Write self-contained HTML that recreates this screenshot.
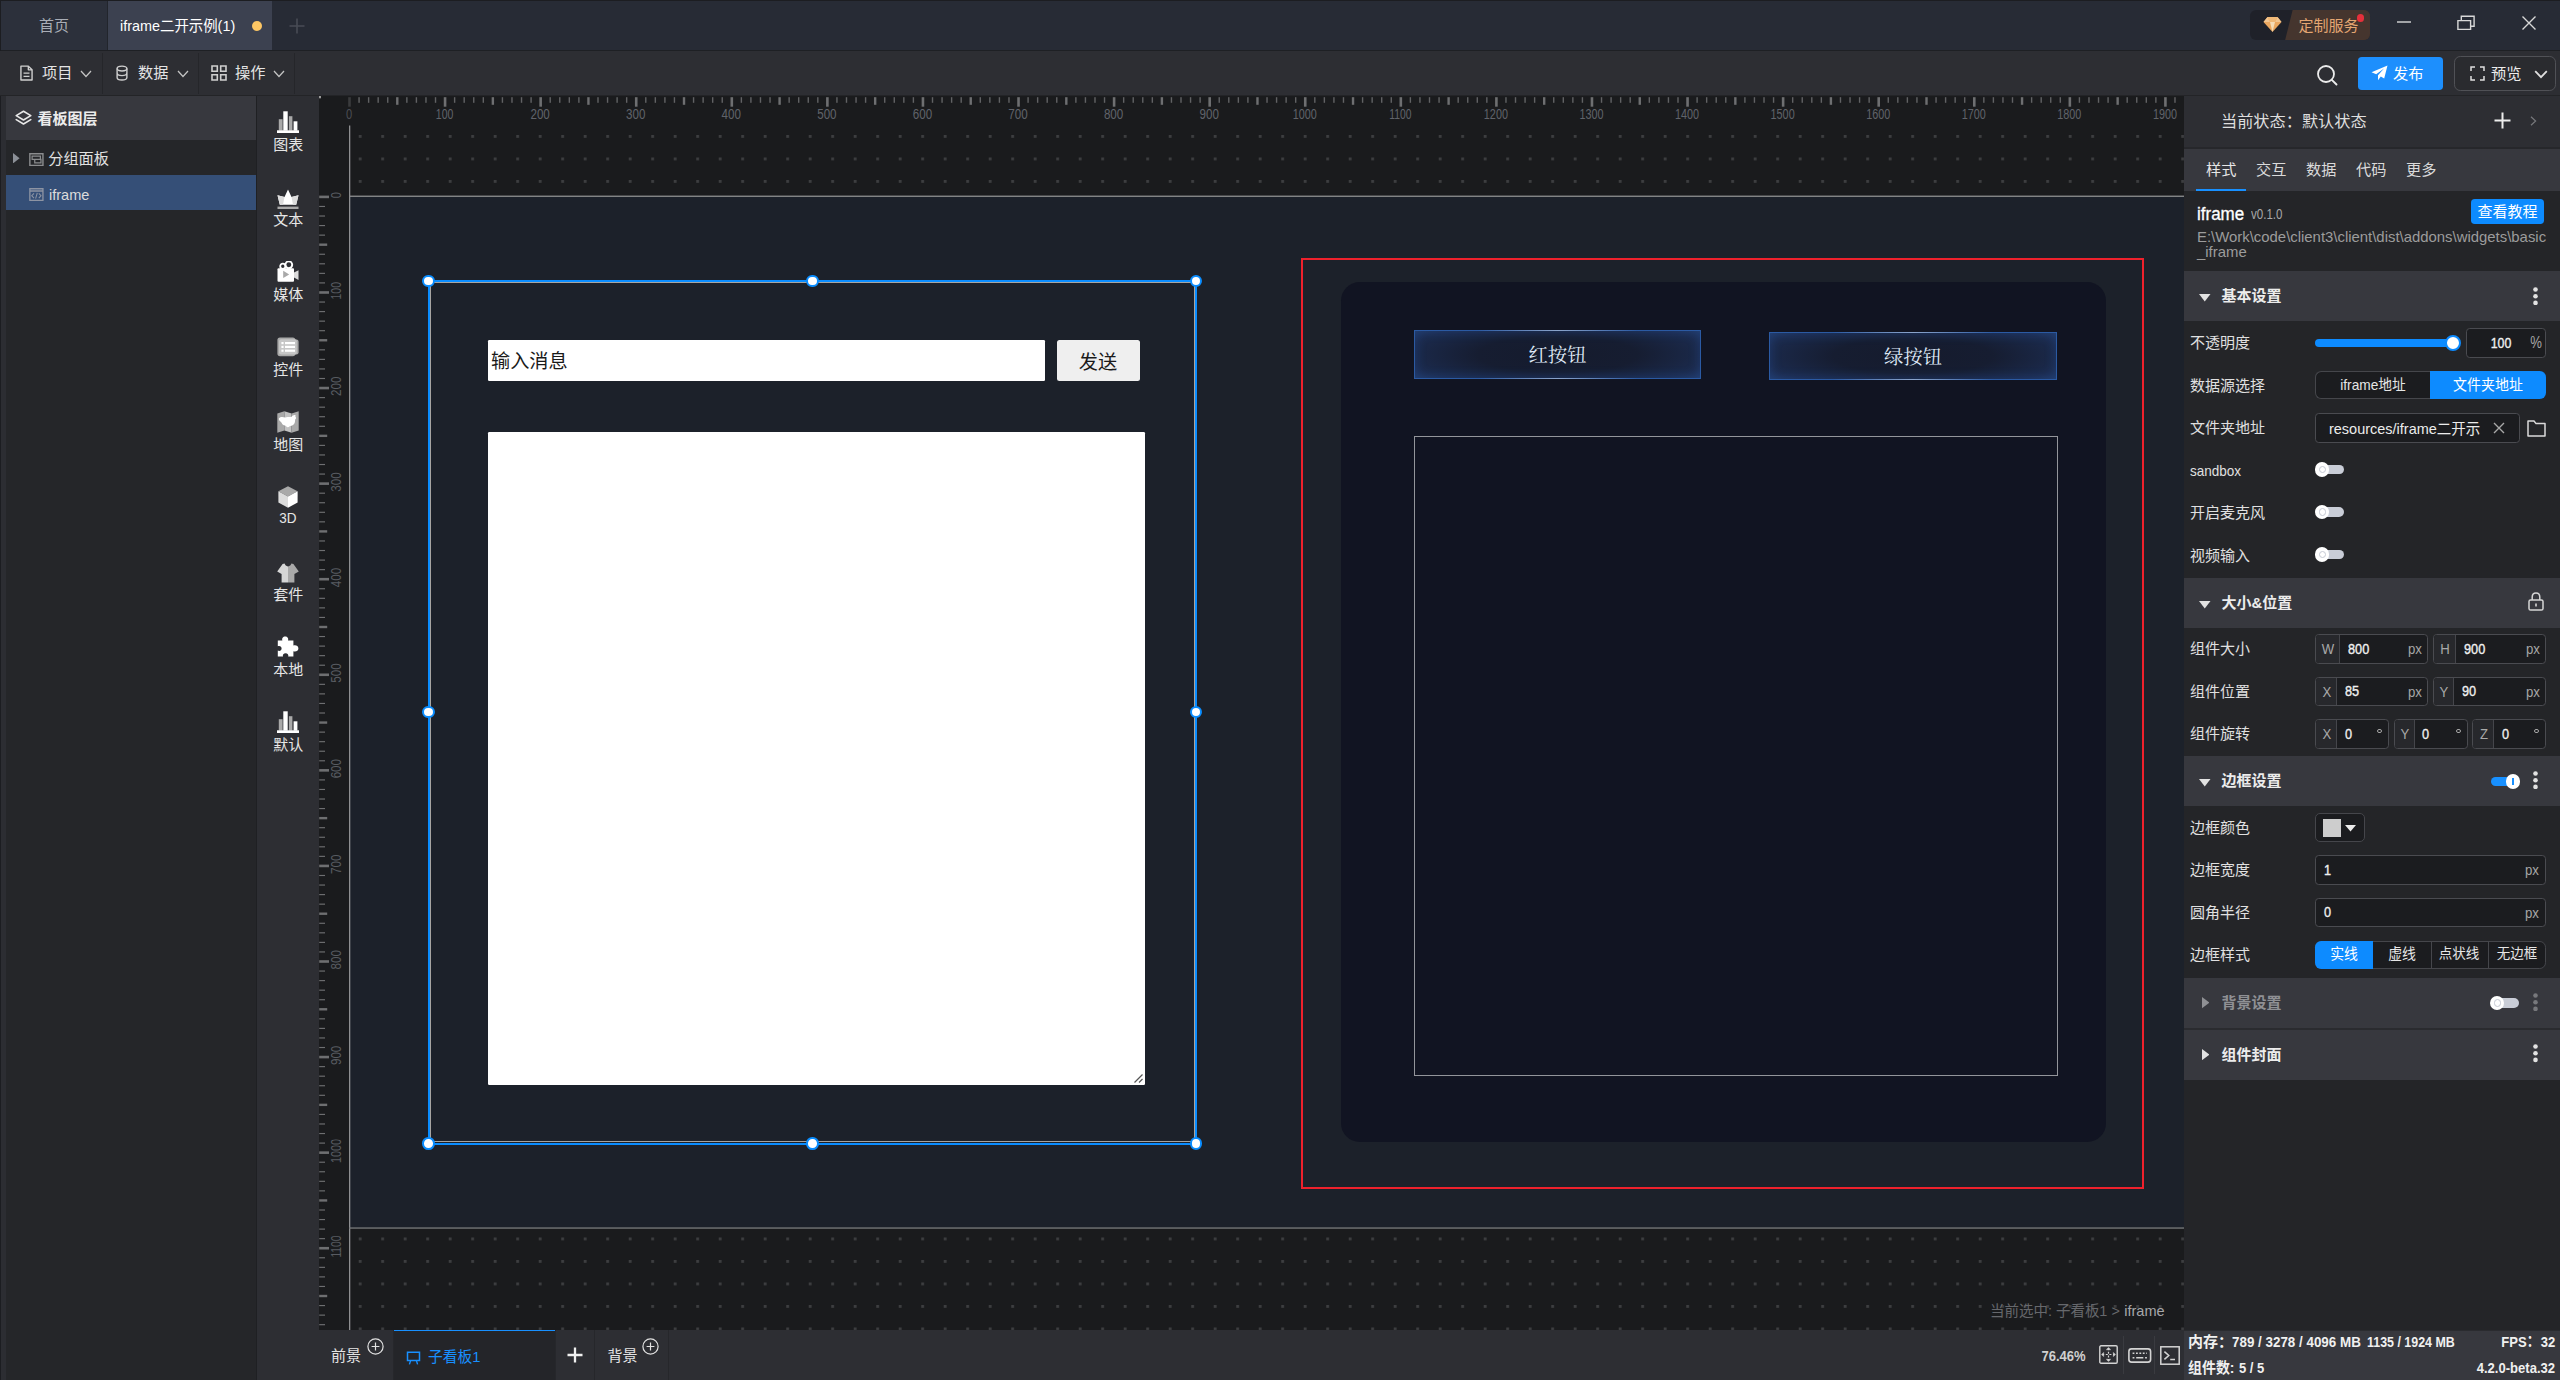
<!DOCTYPE html>
<html lang="zh-CN"><head><meta charset="utf-8"><title>iframe二开示例</title>
<style>
html,body{margin:0;padding:0;background:#232427;}
html{overflow:hidden;width:2560px;height:1380px;}
body{zoom:1.25;width:2048px;height:1104px;overflow:hidden;position:relative;
 font-family:"Liberation Sans","Noto Sans CJK SC",sans-serif;font-size:12px;color:#d6d6d6;line-height:1;}
@supports not (zoom:1.25){body{transform:scale(1.25);transform-origin:0 0;}}
div,span,svg{position:absolute;box-sizing:border-box;}
span.t{white-space:nowrap;}
.b{font-weight:bold;}
.num{font-family:"Liberation Sans",sans-serif;display:inline-block;transform-origin:0 50%;}
.serif{font-family:"Liberation Serif","Noto Serif CJK SC",serif;}
</style></head>
<body>
<svg style="left:0;top:0;width:2048px;height:1104px;font-family:'Liberation Sans',sans-serif" viewBox="0 0 2560 1380"><defs><pattern id="dots" x="358.75" y="135" width="22.5" height="22.5" patternUnits="userSpaceOnUse"><rect x="0" y="0" width="2.8" height="2.8" fill="#3d3e40"/></pattern></defs><rect x="318.75" y="95" width="1865.25" height="1235" fill="#1a1b1d"/><rect x="351" y="126" width="1833" height="1204" fill="url(#dots)"/><rect x="349.5" y="196.3" width="1834.5" height="1031.7" fill="#1c212a"/><rect x="349" y="125.5" width="1.3" height="1204.5" fill="#8e8f91"/><rect x="349" y="195.6" width="1835" height="1.3" fill="#8e8f91"/><rect x="349" y="1227.4" width="1835" height="1.3" fill="#7a7b7d"/><rect x="319" y="95.3" width="2" height="3" fill="#9a9a9a"/><rect x="348.20" y="97.2" width="2.6" height="9.5" fill="#3a3b3d"/><text x="345.90" y="119.4" font-size="14" textLength="6.199999999999999" lengthAdjust="spacingAndGlyphs" fill="#4b4d52">0</text><rect x="358.36" y="97.2" width="1.4" height="5.6" fill="#616264"/><rect x="367.92" y="97.2" width="1.4" height="5.6" fill="#616264"/><rect x="377.47" y="97.2" width="1.4" height="5.6" fill="#616264"/><rect x="387.03" y="97.2" width="1.4" height="5.6" fill="#616264"/><rect x="396.09" y="97.2" width="2.4" height="7.6" fill="#6e6f71"/><rect x="406.15" y="97.2" width="1.4" height="5.6" fill="#616264"/><rect x="415.70" y="97.2" width="1.4" height="5.6" fill="#616264"/><rect x="425.26" y="97.2" width="1.4" height="5.6" fill="#616264"/><rect x="434.82" y="97.2" width="1.4" height="5.6" fill="#616264"/><rect x="443.77" y="97.2" width="2.6" height="9.5" fill="#6e6f71"/><text x="435.82" y="119.4" font-size="14" textLength="17.5" lengthAdjust="spacingAndGlyphs" fill="#60636a">100</text><rect x="453.93" y="97.2" width="1.4" height="5.6" fill="#616264"/><rect x="463.49" y="97.2" width="1.4" height="5.6" fill="#616264"/><rect x="473.05" y="97.2" width="1.4" height="5.6" fill="#616264"/><rect x="482.61" y="97.2" width="1.4" height="5.6" fill="#616264"/><rect x="491.66" y="97.2" width="2.4" height="7.6" fill="#6e6f71"/><rect x="501.72" y="97.2" width="1.4" height="5.6" fill="#616264"/><rect x="511.28" y="97.2" width="1.4" height="5.6" fill="#616264"/><rect x="520.83" y="97.2" width="1.4" height="5.6" fill="#616264"/><rect x="530.39" y="97.2" width="1.4" height="5.6" fill="#616264"/><rect x="539.35" y="97.2" width="2.6" height="9.5" fill="#6e6f71"/><text x="530.45" y="119.4" font-size="14" textLength="19.4" lengthAdjust="spacingAndGlyphs" fill="#60636a">200</text><rect x="549.51" y="97.2" width="1.4" height="5.6" fill="#616264"/><rect x="559.06" y="97.2" width="1.4" height="5.6" fill="#616264"/><rect x="568.62" y="97.2" width="1.4" height="5.6" fill="#616264"/><rect x="578.18" y="97.2" width="1.4" height="5.6" fill="#616264"/><rect x="587.24" y="97.2" width="2.4" height="7.6" fill="#6e6f71"/><rect x="597.29" y="97.2" width="1.4" height="5.6" fill="#616264"/><rect x="606.85" y="97.2" width="1.4" height="5.6" fill="#616264"/><rect x="616.41" y="97.2" width="1.4" height="5.6" fill="#616264"/><rect x="625.97" y="97.2" width="1.4" height="5.6" fill="#616264"/><rect x="634.93" y="97.2" width="2.6" height="9.5" fill="#6e6f71"/><text x="626.02" y="119.4" font-size="14" textLength="19.4" lengthAdjust="spacingAndGlyphs" fill="#60636a">300</text><rect x="645.08" y="97.2" width="1.4" height="5.6" fill="#616264"/><rect x="654.64" y="97.2" width="1.4" height="5.6" fill="#616264"/><rect x="664.20" y="97.2" width="1.4" height="5.6" fill="#616264"/><rect x="673.75" y="97.2" width="1.4" height="5.6" fill="#616264"/><rect x="682.81" y="97.2" width="2.4" height="7.6" fill="#6e6f71"/><rect x="692.87" y="97.2" width="1.4" height="5.6" fill="#616264"/><rect x="702.43" y="97.2" width="1.4" height="5.6" fill="#616264"/><rect x="711.98" y="97.2" width="1.4" height="5.6" fill="#616264"/><rect x="721.54" y="97.2" width="1.4" height="5.6" fill="#616264"/><rect x="730.50" y="97.2" width="2.6" height="9.5" fill="#6e6f71"/><text x="721.60" y="119.4" font-size="14" textLength="19.4" lengthAdjust="spacingAndGlyphs" fill="#60636a">400</text><rect x="740.66" y="97.2" width="1.4" height="5.6" fill="#616264"/><rect x="750.21" y="97.2" width="1.4" height="5.6" fill="#616264"/><rect x="759.77" y="97.2" width="1.4" height="5.6" fill="#616264"/><rect x="769.33" y="97.2" width="1.4" height="5.6" fill="#616264"/><rect x="778.39" y="97.2" width="2.4" height="7.6" fill="#6e6f71"/><rect x="788.44" y="97.2" width="1.4" height="5.6" fill="#616264"/><rect x="798.00" y="97.2" width="1.4" height="5.6" fill="#616264"/><rect x="807.56" y="97.2" width="1.4" height="5.6" fill="#616264"/><rect x="817.12" y="97.2" width="1.4" height="5.6" fill="#616264"/><rect x="826.08" y="97.2" width="2.6" height="9.5" fill="#6e6f71"/><text x="817.17" y="119.4" font-size="14" textLength="19.4" lengthAdjust="spacingAndGlyphs" fill="#60636a">500</text><rect x="836.23" y="97.2" width="1.4" height="5.6" fill="#616264"/><rect x="845.79" y="97.2" width="1.4" height="5.6" fill="#616264"/><rect x="855.35" y="97.2" width="1.4" height="5.6" fill="#616264"/><rect x="864.90" y="97.2" width="1.4" height="5.6" fill="#616264"/><rect x="873.96" y="97.2" width="2.4" height="7.6" fill="#6e6f71"/><rect x="884.02" y="97.2" width="1.4" height="5.6" fill="#616264"/><rect x="893.58" y="97.2" width="1.4" height="5.6" fill="#616264"/><rect x="903.13" y="97.2" width="1.4" height="5.6" fill="#616264"/><rect x="912.69" y="97.2" width="1.4" height="5.6" fill="#616264"/><rect x="921.65" y="97.2" width="2.6" height="9.5" fill="#6e6f71"/><text x="912.75" y="119.4" font-size="14" textLength="19.4" lengthAdjust="spacingAndGlyphs" fill="#60636a">600</text><rect x="931.81" y="97.2" width="1.4" height="5.6" fill="#616264"/><rect x="941.36" y="97.2" width="1.4" height="5.6" fill="#616264"/><rect x="950.92" y="97.2" width="1.4" height="5.6" fill="#616264"/><rect x="960.48" y="97.2" width="1.4" height="5.6" fill="#616264"/><rect x="969.54" y="97.2" width="2.4" height="7.6" fill="#6e6f71"/><rect x="979.59" y="97.2" width="1.4" height="5.6" fill="#616264"/><rect x="989.15" y="97.2" width="1.4" height="5.6" fill="#616264"/><rect x="998.71" y="97.2" width="1.4" height="5.6" fill="#616264"/><rect x="1008.27" y="97.2" width="1.4" height="5.6" fill="#616264"/><rect x="1017.23" y="97.2" width="2.6" height="9.5" fill="#6e6f71"/><text x="1008.32" y="119.4" font-size="14" textLength="19.4" lengthAdjust="spacingAndGlyphs" fill="#60636a">700</text><rect x="1027.38" y="97.2" width="1.4" height="5.6" fill="#616264"/><rect x="1036.94" y="97.2" width="1.4" height="5.6" fill="#616264"/><rect x="1046.50" y="97.2" width="1.4" height="5.6" fill="#616264"/><rect x="1056.06" y="97.2" width="1.4" height="5.6" fill="#616264"/><rect x="1065.11" y="97.2" width="2.4" height="7.6" fill="#6e6f71"/><rect x="1075.17" y="97.2" width="1.4" height="5.6" fill="#616264"/><rect x="1084.73" y="97.2" width="1.4" height="5.6" fill="#616264"/><rect x="1094.29" y="97.2" width="1.4" height="5.6" fill="#616264"/><rect x="1103.84" y="97.2" width="1.4" height="5.6" fill="#616264"/><rect x="1112.80" y="97.2" width="2.6" height="9.5" fill="#6e6f71"/><text x="1103.90" y="119.4" font-size="14" textLength="19.4" lengthAdjust="spacingAndGlyphs" fill="#60636a">800</text><rect x="1122.96" y="97.2" width="1.4" height="5.6" fill="#616264"/><rect x="1132.52" y="97.2" width="1.4" height="5.6" fill="#616264"/><rect x="1142.07" y="97.2" width="1.4" height="5.6" fill="#616264"/><rect x="1151.63" y="97.2" width="1.4" height="5.6" fill="#616264"/><rect x="1160.69" y="97.2" width="2.4" height="7.6" fill="#6e6f71"/><rect x="1170.74" y="97.2" width="1.4" height="5.6" fill="#616264"/><rect x="1180.30" y="97.2" width="1.4" height="5.6" fill="#616264"/><rect x="1189.86" y="97.2" width="1.4" height="5.6" fill="#616264"/><rect x="1199.42" y="97.2" width="1.4" height="5.6" fill="#616264"/><rect x="1208.38" y="97.2" width="2.6" height="9.5" fill="#6e6f71"/><text x="1199.47" y="119.4" font-size="14" textLength="19.4" lengthAdjust="spacingAndGlyphs" fill="#60636a">900</text><rect x="1218.53" y="97.2" width="1.4" height="5.6" fill="#616264"/><rect x="1228.09" y="97.2" width="1.4" height="5.6" fill="#616264"/><rect x="1237.65" y="97.2" width="1.4" height="5.6" fill="#616264"/><rect x="1247.20" y="97.2" width="1.4" height="5.6" fill="#616264"/><rect x="1256.26" y="97.2" width="2.4" height="7.6" fill="#6e6f71"/><rect x="1266.32" y="97.2" width="1.4" height="5.6" fill="#616264"/><rect x="1275.88" y="97.2" width="1.4" height="5.6" fill="#616264"/><rect x="1285.43" y="97.2" width="1.4" height="5.6" fill="#616264"/><rect x="1294.99" y="97.2" width="1.4" height="5.6" fill="#616264"/><rect x="1303.95" y="97.2" width="2.6" height="9.5" fill="#6e6f71"/><text x="1292.70" y="119.4" font-size="14" textLength="24.1" lengthAdjust="spacingAndGlyphs" fill="#60636a">1000</text><rect x="1314.11" y="97.2" width="1.4" height="5.6" fill="#616264"/><rect x="1323.66" y="97.2" width="1.4" height="5.6" fill="#616264"/><rect x="1333.22" y="97.2" width="1.4" height="5.6" fill="#616264"/><rect x="1342.78" y="97.2" width="1.4" height="5.6" fill="#616264"/><rect x="1351.84" y="97.2" width="2.4" height="7.6" fill="#6e6f71"/><rect x="1361.89" y="97.2" width="1.4" height="5.6" fill="#616264"/><rect x="1371.45" y="97.2" width="1.4" height="5.6" fill="#616264"/><rect x="1381.01" y="97.2" width="1.4" height="5.6" fill="#616264"/><rect x="1390.57" y="97.2" width="1.4" height="5.6" fill="#616264"/><rect x="1399.53" y="97.2" width="2.6" height="9.5" fill="#6e6f71"/><text x="1389.23" y="119.4" font-size="14" textLength="22.200000000000003" lengthAdjust="spacingAndGlyphs" fill="#60636a">1100</text><rect x="1409.68" y="97.2" width="1.4" height="5.6" fill="#616264"/><rect x="1419.24" y="97.2" width="1.4" height="5.6" fill="#616264"/><rect x="1428.80" y="97.2" width="1.4" height="5.6" fill="#616264"/><rect x="1438.36" y="97.2" width="1.4" height="5.6" fill="#616264"/><rect x="1447.41" y="97.2" width="2.4" height="7.6" fill="#6e6f71"/><rect x="1457.47" y="97.2" width="1.4" height="5.6" fill="#616264"/><rect x="1467.03" y="97.2" width="1.4" height="5.6" fill="#616264"/><rect x="1476.59" y="97.2" width="1.4" height="5.6" fill="#616264"/><rect x="1486.14" y="97.2" width="1.4" height="5.6" fill="#616264"/><rect x="1495.10" y="97.2" width="2.6" height="9.5" fill="#6e6f71"/><text x="1483.85" y="119.4" font-size="14" textLength="24.1" lengthAdjust="spacingAndGlyphs" fill="#60636a">1200</text><rect x="1505.26" y="97.2" width="1.4" height="5.6" fill="#616264"/><rect x="1514.81" y="97.2" width="1.4" height="5.6" fill="#616264"/><rect x="1524.37" y="97.2" width="1.4" height="5.6" fill="#616264"/><rect x="1533.93" y="97.2" width="1.4" height="5.6" fill="#616264"/><rect x="1542.99" y="97.2" width="2.4" height="7.6" fill="#6e6f71"/><rect x="1553.04" y="97.2" width="1.4" height="5.6" fill="#616264"/><rect x="1562.60" y="97.2" width="1.4" height="5.6" fill="#616264"/><rect x="1572.16" y="97.2" width="1.4" height="5.6" fill="#616264"/><rect x="1581.72" y="97.2" width="1.4" height="5.6" fill="#616264"/><rect x="1590.67" y="97.2" width="2.6" height="9.5" fill="#6e6f71"/><text x="1579.42" y="119.4" font-size="14" textLength="24.1" lengthAdjust="spacingAndGlyphs" fill="#60636a">1300</text><rect x="1600.83" y="97.2" width="1.4" height="5.6" fill="#616264"/><rect x="1610.39" y="97.2" width="1.4" height="5.6" fill="#616264"/><rect x="1619.95" y="97.2" width="1.4" height="5.6" fill="#616264"/><rect x="1629.50" y="97.2" width="1.4" height="5.6" fill="#616264"/><rect x="1638.56" y="97.2" width="2.4" height="7.6" fill="#6e6f71"/><rect x="1648.62" y="97.2" width="1.4" height="5.6" fill="#616264"/><rect x="1658.18" y="97.2" width="1.4" height="5.6" fill="#616264"/><rect x="1667.73" y="97.2" width="1.4" height="5.6" fill="#616264"/><rect x="1677.29" y="97.2" width="1.4" height="5.6" fill="#616264"/><rect x="1686.25" y="97.2" width="2.6" height="9.5" fill="#6e6f71"/><text x="1675.00" y="119.4" font-size="14" textLength="24.1" lengthAdjust="spacingAndGlyphs" fill="#60636a">1400</text><rect x="1696.41" y="97.2" width="1.4" height="5.6" fill="#616264"/><rect x="1705.96" y="97.2" width="1.4" height="5.6" fill="#616264"/><rect x="1715.52" y="97.2" width="1.4" height="5.6" fill="#616264"/><rect x="1725.08" y="97.2" width="1.4" height="5.6" fill="#616264"/><rect x="1734.14" y="97.2" width="2.4" height="7.6" fill="#6e6f71"/><rect x="1744.19" y="97.2" width="1.4" height="5.6" fill="#616264"/><rect x="1753.75" y="97.2" width="1.4" height="5.6" fill="#616264"/><rect x="1763.31" y="97.2" width="1.4" height="5.6" fill="#616264"/><rect x="1772.87" y="97.2" width="1.4" height="5.6" fill="#616264"/><rect x="1781.83" y="97.2" width="2.6" height="9.5" fill="#6e6f71"/><text x="1770.58" y="119.4" font-size="14" textLength="24.1" lengthAdjust="spacingAndGlyphs" fill="#60636a">1500</text><rect x="1791.98" y="97.2" width="1.4" height="5.6" fill="#616264"/><rect x="1801.54" y="97.2" width="1.4" height="5.6" fill="#616264"/><rect x="1811.10" y="97.2" width="1.4" height="5.6" fill="#616264"/><rect x="1820.65" y="97.2" width="1.4" height="5.6" fill="#616264"/><rect x="1829.71" y="97.2" width="2.4" height="7.6" fill="#6e6f71"/><rect x="1839.77" y="97.2" width="1.4" height="5.6" fill="#616264"/><rect x="1849.33" y="97.2" width="1.4" height="5.6" fill="#616264"/><rect x="1858.88" y="97.2" width="1.4" height="5.6" fill="#616264"/><rect x="1868.44" y="97.2" width="1.4" height="5.6" fill="#616264"/><rect x="1877.40" y="97.2" width="2.6" height="9.5" fill="#6e6f71"/><text x="1866.15" y="119.4" font-size="14" textLength="24.1" lengthAdjust="spacingAndGlyphs" fill="#60636a">1600</text><rect x="1887.56" y="97.2" width="1.4" height="5.6" fill="#616264"/><rect x="1897.12" y="97.2" width="1.4" height="5.6" fill="#616264"/><rect x="1906.67" y="97.2" width="1.4" height="5.6" fill="#616264"/><rect x="1916.23" y="97.2" width="1.4" height="5.6" fill="#616264"/><rect x="1925.29" y="97.2" width="2.4" height="7.6" fill="#6e6f71"/><rect x="1935.35" y="97.2" width="1.4" height="5.6" fill="#616264"/><rect x="1944.90" y="97.2" width="1.4" height="5.6" fill="#616264"/><rect x="1954.46" y="97.2" width="1.4" height="5.6" fill="#616264"/><rect x="1964.02" y="97.2" width="1.4" height="5.6" fill="#616264"/><rect x="1972.98" y="97.2" width="2.6" height="9.5" fill="#6e6f71"/><text x="1961.73" y="119.4" font-size="14" textLength="24.1" lengthAdjust="spacingAndGlyphs" fill="#60636a">1700</text><rect x="1983.13" y="97.2" width="1.4" height="5.6" fill="#616264"/><rect x="1992.69" y="97.2" width="1.4" height="5.6" fill="#616264"/><rect x="2002.25" y="97.2" width="1.4" height="5.6" fill="#616264"/><rect x="2011.80" y="97.2" width="1.4" height="5.6" fill="#616264"/><rect x="2020.86" y="97.2" width="2.4" height="7.6" fill="#6e6f71"/><rect x="2030.92" y="97.2" width="1.4" height="5.6" fill="#616264"/><rect x="2040.48" y="97.2" width="1.4" height="5.6" fill="#616264"/><rect x="2050.03" y="97.2" width="1.4" height="5.6" fill="#616264"/><rect x="2059.59" y="97.2" width="1.4" height="5.6" fill="#616264"/><rect x="2068.55" y="97.2" width="2.6" height="9.5" fill="#6e6f71"/><text x="2057.30" y="119.4" font-size="14" textLength="24.1" lengthAdjust="spacingAndGlyphs" fill="#60636a">1800</text><rect x="2078.71" y="97.2" width="1.4" height="5.6" fill="#616264"/><rect x="2088.27" y="97.2" width="1.4" height="5.6" fill="#616264"/><rect x="2097.82" y="97.2" width="1.4" height="5.6" fill="#616264"/><rect x="2107.38" y="97.2" width="1.4" height="5.6" fill="#616264"/><rect x="2116.44" y="97.2" width="2.4" height="7.6" fill="#6e6f71"/><rect x="2126.49" y="97.2" width="1.4" height="5.6" fill="#616264"/><rect x="2136.05" y="97.2" width="1.4" height="5.6" fill="#616264"/><rect x="2145.61" y="97.2" width="1.4" height="5.6" fill="#616264"/><rect x="2155.17" y="97.2" width="1.4" height="5.6" fill="#616264"/><rect x="2164.12" y="97.2" width="2.6" height="9.5" fill="#6e6f71"/><text x="2152.88" y="119.4" font-size="14" textLength="24.1" lengthAdjust="spacingAndGlyphs" fill="#60636a">1900</text><rect x="2174.28" y="97.2" width="1.4" height="5.6" fill="#616264"/><rect x="319.2" y="195.60" width="9.8" height="2.6" fill="#6e6f71"/><text transform="translate(341.2,198.30) rotate(-90)" font-size="14" textLength="6.199999999999999" lengthAdjust="spacingAndGlyphs" fill="#585b61">0</text><rect x="319.2" y="205.88" width="5.8" height="1.15" fill="#6e6f71"/><rect x="319.2" y="215.44" width="5.8" height="1.15" fill="#6e6f71"/><rect x="319.2" y="225.00" width="5.8" height="1.15" fill="#6e6f71"/><rect x="319.2" y="234.56" width="5.8" height="1.15" fill="#6e6f71"/><rect x="319.2" y="243.49" width="8.0" height="2.4" fill="#6e6f71"/><rect x="319.2" y="253.67" width="5.8" height="1.15" fill="#6e6f71"/><rect x="319.2" y="263.23" width="5.8" height="1.15" fill="#6e6f71"/><rect x="319.2" y="272.79" width="5.8" height="1.15" fill="#6e6f71"/><rect x="319.2" y="282.34" width="5.8" height="1.15" fill="#6e6f71"/><rect x="319.2" y="291.18" width="9.8" height="2.6" fill="#6e6f71"/><text transform="translate(341.2,299.53) rotate(-90)" font-size="14" textLength="17.5" lengthAdjust="spacingAndGlyphs" fill="#585b61">100</text><rect x="319.2" y="301.46" width="5.8" height="1.15" fill="#6e6f71"/><rect x="319.2" y="311.02" width="5.8" height="1.15" fill="#6e6f71"/><rect x="319.2" y="320.57" width="5.8" height="1.15" fill="#6e6f71"/><rect x="319.2" y="330.13" width="5.8" height="1.15" fill="#6e6f71"/><rect x="319.2" y="339.06" width="8.0" height="2.4" fill="#6e6f71"/><rect x="319.2" y="349.25" width="5.8" height="1.15" fill="#6e6f71"/><rect x="319.2" y="358.80" width="5.8" height="1.15" fill="#6e6f71"/><rect x="319.2" y="368.36" width="5.8" height="1.15" fill="#6e6f71"/><rect x="319.2" y="377.92" width="5.8" height="1.15" fill="#6e6f71"/><rect x="319.2" y="386.75" width="9.8" height="2.6" fill="#6e6f71"/><text transform="translate(341.2,396.05) rotate(-90)" font-size="14" textLength="19.4" lengthAdjust="spacingAndGlyphs" fill="#585b61">200</text><rect x="319.2" y="397.03" width="5.8" height="1.15" fill="#6e6f71"/><rect x="319.2" y="406.59" width="5.8" height="1.15" fill="#6e6f71"/><rect x="319.2" y="416.15" width="5.8" height="1.15" fill="#6e6f71"/><rect x="319.2" y="425.71" width="5.8" height="1.15" fill="#6e6f71"/><rect x="319.2" y="434.64" width="8.0" height="2.4" fill="#6e6f71"/><rect x="319.2" y="444.82" width="5.8" height="1.15" fill="#6e6f71"/><rect x="319.2" y="454.38" width="5.8" height="1.15" fill="#6e6f71"/><rect x="319.2" y="463.94" width="5.8" height="1.15" fill="#6e6f71"/><rect x="319.2" y="473.49" width="5.8" height="1.15" fill="#6e6f71"/><rect x="319.2" y="482.33" width="9.8" height="2.6" fill="#6e6f71"/><text transform="translate(341.2,491.63) rotate(-90)" font-size="14" textLength="19.4" lengthAdjust="spacingAndGlyphs" fill="#585b61">300</text><rect x="319.2" y="492.61" width="5.8" height="1.15" fill="#6e6f71"/><rect x="319.2" y="502.17" width="5.8" height="1.15" fill="#6e6f71"/><rect x="319.2" y="511.72" width="5.8" height="1.15" fill="#6e6f71"/><rect x="319.2" y="521.28" width="5.8" height="1.15" fill="#6e6f71"/><rect x="319.2" y="530.21" width="8.0" height="2.4" fill="#6e6f71"/><rect x="319.2" y="540.39" width="5.8" height="1.15" fill="#6e6f71"/><rect x="319.2" y="549.95" width="5.8" height="1.15" fill="#6e6f71"/><rect x="319.2" y="559.51" width="5.8" height="1.15" fill="#6e6f71"/><rect x="319.2" y="569.07" width="5.8" height="1.15" fill="#6e6f71"/><rect x="319.2" y="577.90" width="9.8" height="2.6" fill="#6e6f71"/><text transform="translate(341.2,587.20) rotate(-90)" font-size="14" textLength="19.4" lengthAdjust="spacingAndGlyphs" fill="#585b61">400</text><rect x="319.2" y="588.18" width="5.8" height="1.15" fill="#6e6f71"/><rect x="319.2" y="597.74" width="5.8" height="1.15" fill="#6e6f71"/><rect x="319.2" y="607.30" width="5.8" height="1.15" fill="#6e6f71"/><rect x="319.2" y="616.85" width="5.8" height="1.15" fill="#6e6f71"/><rect x="319.2" y="625.79" width="8.0" height="2.4" fill="#6e6f71"/><rect x="319.2" y="635.97" width="5.8" height="1.15" fill="#6e6f71"/><rect x="319.2" y="645.53" width="5.8" height="1.15" fill="#6e6f71"/><rect x="319.2" y="655.08" width="5.8" height="1.15" fill="#6e6f71"/><rect x="319.2" y="664.64" width="5.8" height="1.15" fill="#6e6f71"/><rect x="319.2" y="673.48" width="9.8" height="2.6" fill="#6e6f71"/><text transform="translate(341.2,682.77) rotate(-90)" font-size="14" textLength="19.4" lengthAdjust="spacingAndGlyphs" fill="#585b61">500</text><rect x="319.2" y="683.76" width="5.8" height="1.15" fill="#6e6f71"/><rect x="319.2" y="693.31" width="5.8" height="1.15" fill="#6e6f71"/><rect x="319.2" y="702.87" width="5.8" height="1.15" fill="#6e6f71"/><rect x="319.2" y="712.43" width="5.8" height="1.15" fill="#6e6f71"/><rect x="319.2" y="721.36" width="8.0" height="2.4" fill="#6e6f71"/><rect x="319.2" y="731.54" width="5.8" height="1.15" fill="#6e6f71"/><rect x="319.2" y="741.10" width="5.8" height="1.15" fill="#6e6f71"/><rect x="319.2" y="750.66" width="5.8" height="1.15" fill="#6e6f71"/><rect x="319.2" y="760.22" width="5.8" height="1.15" fill="#6e6f71"/><rect x="319.2" y="769.05" width="9.8" height="2.6" fill="#6e6f71"/><text transform="translate(341.2,778.35) rotate(-90)" font-size="14" textLength="19.4" lengthAdjust="spacingAndGlyphs" fill="#585b61">600</text><rect x="319.2" y="779.33" width="5.8" height="1.15" fill="#6e6f71"/><rect x="319.2" y="788.89" width="5.8" height="1.15" fill="#6e6f71"/><rect x="319.2" y="798.45" width="5.8" height="1.15" fill="#6e6f71"/><rect x="319.2" y="808.00" width="5.8" height="1.15" fill="#6e6f71"/><rect x="319.2" y="816.94" width="8.0" height="2.4" fill="#6e6f71"/><rect x="319.2" y="827.12" width="5.8" height="1.15" fill="#6e6f71"/><rect x="319.2" y="836.68" width="5.8" height="1.15" fill="#6e6f71"/><rect x="319.2" y="846.24" width="5.8" height="1.15" fill="#6e6f71"/><rect x="319.2" y="855.79" width="5.8" height="1.15" fill="#6e6f71"/><rect x="319.2" y="864.63" width="9.8" height="2.6" fill="#6e6f71"/><text transform="translate(341.2,873.93) rotate(-90)" font-size="14" textLength="19.4" lengthAdjust="spacingAndGlyphs" fill="#585b61">700</text><rect x="319.2" y="874.91" width="5.8" height="1.15" fill="#6e6f71"/><rect x="319.2" y="884.47" width="5.8" height="1.15" fill="#6e6f71"/><rect x="319.2" y="894.02" width="5.8" height="1.15" fill="#6e6f71"/><rect x="319.2" y="903.58" width="5.8" height="1.15" fill="#6e6f71"/><rect x="319.2" y="912.51" width="8.0" height="2.4" fill="#6e6f71"/><rect x="319.2" y="922.70" width="5.8" height="1.15" fill="#6e6f71"/><rect x="319.2" y="932.25" width="5.8" height="1.15" fill="#6e6f71"/><rect x="319.2" y="941.81" width="5.8" height="1.15" fill="#6e6f71"/><rect x="319.2" y="951.37" width="5.8" height="1.15" fill="#6e6f71"/><rect x="319.2" y="960.20" width="9.8" height="2.6" fill="#6e6f71"/><text transform="translate(341.2,969.50) rotate(-90)" font-size="14" textLength="19.4" lengthAdjust="spacingAndGlyphs" fill="#585b61">800</text><rect x="319.2" y="970.48" width="5.8" height="1.15" fill="#6e6f71"/><rect x="319.2" y="980.04" width="5.8" height="1.15" fill="#6e6f71"/><rect x="319.2" y="989.60" width="5.8" height="1.15" fill="#6e6f71"/><rect x="319.2" y="999.16" width="5.8" height="1.15" fill="#6e6f71"/><rect x="319.2" y="1008.09" width="8.0" height="2.4" fill="#6e6f71"/><rect x="319.2" y="1018.27" width="5.8" height="1.15" fill="#6e6f71"/><rect x="319.2" y="1027.83" width="5.8" height="1.15" fill="#6e6f71"/><rect x="319.2" y="1037.38" width="5.8" height="1.15" fill="#6e6f71"/><rect x="319.2" y="1046.94" width="5.8" height="1.15" fill="#6e6f71"/><rect x="319.2" y="1055.77" width="9.8" height="2.6" fill="#6e6f71"/><text transform="translate(341.2,1065.07) rotate(-90)" font-size="14" textLength="19.4" lengthAdjust="spacingAndGlyphs" fill="#585b61">900</text><rect x="319.2" y="1066.06" width="5.8" height="1.15" fill="#6e6f71"/><rect x="319.2" y="1075.61" width="5.8" height="1.15" fill="#6e6f71"/><rect x="319.2" y="1085.17" width="5.8" height="1.15" fill="#6e6f71"/><rect x="319.2" y="1094.73" width="5.8" height="1.15" fill="#6e6f71"/><rect x="319.2" y="1103.66" width="8.0" height="2.4" fill="#6e6f71"/><rect x="319.2" y="1113.84" width="5.8" height="1.15" fill="#6e6f71"/><rect x="319.2" y="1123.40" width="5.8" height="1.15" fill="#6e6f71"/><rect x="319.2" y="1132.96" width="5.8" height="1.15" fill="#6e6f71"/><rect x="319.2" y="1142.52" width="5.8" height="1.15" fill="#6e6f71"/><rect x="319.2" y="1151.35" width="9.8" height="2.6" fill="#6e6f71"/><text transform="translate(341.2,1163.00) rotate(-90)" font-size="14" textLength="24.1" lengthAdjust="spacingAndGlyphs" fill="#585b61">1000</text><rect x="319.2" y="1161.63" width="5.8" height="1.15" fill="#6e6f71"/><rect x="319.2" y="1171.19" width="5.8" height="1.15" fill="#6e6f71"/><rect x="319.2" y="1180.75" width="5.8" height="1.15" fill="#6e6f71"/><rect x="319.2" y="1190.30" width="5.8" height="1.15" fill="#6e6f71"/><rect x="319.2" y="1199.24" width="8.0" height="2.4" fill="#6e6f71"/><rect x="319.2" y="1209.42" width="5.8" height="1.15" fill="#6e6f71"/><rect x="319.2" y="1218.98" width="5.8" height="1.15" fill="#6e6f71"/><rect x="319.2" y="1228.53" width="5.8" height="1.15" fill="#6e6f71"/><rect x="319.2" y="1238.09" width="5.8" height="1.15" fill="#6e6f71"/><rect x="319.2" y="1246.92" width="9.8" height="2.6" fill="#6e6f71"/><text transform="translate(341.2,1257.62) rotate(-90)" font-size="14" textLength="22.200000000000003" lengthAdjust="spacingAndGlyphs" fill="#585b61">1100</text><rect x="319.2" y="1257.21" width="5.8" height="1.15" fill="#6e6f71"/><rect x="319.2" y="1266.76" width="5.8" height="1.15" fill="#6e6f71"/><rect x="319.2" y="1276.32" width="5.8" height="1.15" fill="#6e6f71"/><rect x="319.2" y="1285.88" width="5.8" height="1.15" fill="#6e6f71"/><rect x="319.2" y="1294.81" width="8.0" height="2.4" fill="#6e6f71"/><rect x="319.2" y="1304.99" width="5.8" height="1.15" fill="#6e6f71"/><rect x="319.2" y="1314.55" width="5.8" height="1.15" fill="#6e6f71"/><rect x="319.2" y="1324.11" width="5.8" height="1.15" fill="#6e6f71"/></svg>
<div style="left:390.4px;top:271.68px;width:445.6px;height:33.2px;background:#fff;border-radius:1px;"></div>
<span class="t" style="top:278.848px;height:21.504px;line-height:21.504px;font-size:15.360px;color:#1a1a1a;left:392.8px;">输入消息</span>
<div style="left:845.6px;top:271.68px;width:66px;height:33.2px;background:#efefef;border-radius:2px;"></div>
<span class="t" style="top:279.648px;height:21.504px;line-height:21.504px;font-size:15.360px;color:#1a1a1a;left:878.4px;transform:translateX(-50%);">发送</span>
<div style="left:390.4px;top:345.6px;width:525.2px;height:522px;background:#fff;border-radius:1px;"></div>
<svg style="left:905.6px;top:857.6px;width:9.6px;height:9.6px;" viewBox="0 0 12 12"><path d="M2.5 10.5 L10.5 2.5 M7 10.5 L10.5 7" stroke="#555" stroke-width="1.2" fill="none"/></svg>
<div style="left:1072.8px;top:225.6px;width:612px;height:688px;background:#111422;border-radius:15px;"></div>
<div style="left:1040.4px;top:206px;width:674.4px;height:745.2px;border:1.6px solid #ee212c;"></div>
<div style="left:1131.2px;top:264px;width:229.6px;height:39.2px;border:1px solid #2b5aa3;background:radial-gradient(ellipse 62% 85% at 50% 50%,#151b2d 0%,#161d31 45%,#1b2a4c 85%,#1e335c 100%);box-shadow:inset 0 0 9px rgba(46,98,190,.32);"><div style="left:22%;right:22%;top:-1px;height:1.2px;background:linear-gradient(90deg,rgba(170,195,235,0),rgba(180,195,220,.7),rgba(170,195,235,0));"></div><div style="left:22%;right:22%;bottom:-1px;height:1.2px;background:linear-gradient(90deg,rgba(170,195,235,0),rgba(180,195,220,.7),rgba(170,195,235,0));"></div></div><span class="t serif" style="top:273.936px;height:21.728px;line-height:21.728px;font-size:15.520px;color:#dfe9f7;left:1246px;transform:translateX(-50%);">红按钮</span>
<div style="left:1415.2px;top:265.6px;width:230.4px;height:38.4px;border:1px solid #2b5aa3;background:radial-gradient(ellipse 62% 85% at 50% 50%,#151b2d 0%,#161d31 45%,#1b2a4c 85%,#1e335c 100%);box-shadow:inset 0 0 9px rgba(46,98,190,.32);"><div style="left:22%;right:22%;top:-1px;height:1.2px;background:linear-gradient(90deg,rgba(170,195,235,0),rgba(180,195,220,.7),rgba(170,195,235,0));"></div><div style="left:22%;right:22%;bottom:-1px;height:1.2px;background:linear-gradient(90deg,rgba(170,195,235,0),rgba(180,195,220,.7),rgba(170,195,235,0));"></div></div><span class="t serif" style="top:275.136px;height:21.728px;line-height:21.728px;font-size:15.520px;color:#dfe9f7;left:1530.4px;transform:translateX(-50%);">绿按钮</span>
<div style="left:1131.44px;top:349.04px;width:514.72px;height:511.92px;border:1.2px solid #93959b;"></div>
<div style="left:344px;top:225.68px;width:611.84px;height:688.16px;border:1.1px solid #a7a5a2;"></div>
<div style="left:342.16px;top:223.92px;width:615.52px;height:692.08px;border:1.85px solid #0a8dff;"></div>
<div style="left:337.92px;top:219.6px;width:10.08px;height:10.08px;border-radius:50%;background:#fff;border:2.15px solid #0a8dff;"></div>
<div style="left:644.88px;top:219.6px;width:10.08px;height:10.08px;border-radius:50%;background:#fff;border:2.15px solid #0a8dff;"></div>
<div style="left:951.84px;top:219.6px;width:10.08px;height:10.08px;border-radius:50%;background:#fff;border:2.15px solid #0a8dff;"></div>
<div style="left:337.92px;top:564.64px;width:10.08px;height:10.08px;border-radius:50%;background:#fff;border:2.15px solid #0a8dff;"></div>
<div style="left:951.84px;top:564.64px;width:10.08px;height:10.08px;border-radius:50%;background:#fff;border:2.15px solid #0a8dff;"></div>
<div style="left:337.92px;top:909.68px;width:10.08px;height:10.08px;border-radius:50%;background:#fff;border:2.15px solid #0a8dff;"></div>
<div style="left:644.88px;top:909.68px;width:10.08px;height:10.08px;border-radius:50%;background:#fff;border:2.15px solid #0a8dff;"></div>
<div style="left:951.84px;top:909.68px;width:10.08px;height:10.08px;border-radius:50%;background:#fff;border:2.15px solid #0a8dff;"></div>
<div style="left:0px;top:0px;width:2048px;height:40px;background:#272b35;"></div>
<div style="left:0px;top:0px;width:86px;height:40px;background:#2c303b;"></div>
<div style="left:85.6px;top:0px;width:1.04px;height:40px;background:#22252c;"></div>
<div style="left:86.64px;top:0px;width:131.2px;height:40px;background:#3c4150;"></div>
<div style="left:0px;top:39.6px;width:2048px;height:1.44px;background:#1e2024;"></div>
<div style="left:0px;top:0px;width:2048px;height:0.96px;background:#1c1d21;"></div>
<div style="left:0px;top:0px;width:0.96px;height:1104px;background:#1c1d21;"></div>
<span class="t" style="top:12px;height:16.8px;line-height:16.8px;font-size:12.000px;color:#a9adb6;left:43.2px;transform:translateX(-50%);">首页</span>
<span class="t" style="top:12px;height:16.8px;line-height:16.8px;font-size:12.000px;color:#ffffff;left:96px;transform:scaleX(0.96);transform-origin:0 50%;">iframe二开示例(1)</span>
<div style="left:201.6px;top:16.4px;width:8px;height:8px;border-radius:50%;background:#ffc764;"></div>
<svg style="left:231.2px;top:14px;width:12.8px;height:12.8px;" viewBox="0 0 16 16"><path d="M8 0.5V15.5M0.5 8H15.5" stroke="#494c55" stroke-width="1.6" fill="none"/></svg>
<div style="left:1800px;top:7.6px;width:96px;height:24.4px;border-radius:5px;background:#1f2129;overflow:hidden;"><div style="left:29.5%;top:0;right:0;bottom:0;background:#45352e;transform:skewX(-14deg);transform-origin:0 100%;"></div><div style="left:50%;top:0;right:0;bottom:0;background:#45352e;"></div></div>
<svg style="left:1810.4px;top:12.8px;width:15.2px;height:13.6px;" viewBox="0 0 19 17"><path d="M4.5 1H14.5L18.5 6L9.5 16L0.5 6Z" fill="#eaa75f"/><path d="M4.5 1L7 6H0.5ZM14.5 1L12 6H18.5Z" fill="#f1c48f"/><path d="M7 6H12L9.5 16Z" fill="#f6dcb6"/><path d="M4.5 1H14.5L12 6H7Z" fill="#efb877"/></svg>
<span class="t" style="top:12px;height:16.8px;line-height:16.8px;font-size:12.000px;color:#e4a672;left:1838.8px;">定制服务</span>
<div style="left:1885.6px;top:11.36px;width:5.92px;height:5.92px;border-radius:50%;background:#e5303b;"></div>
<svg style="left:1916.8px;top:11.2px;width:12.8px;height:12.8px;" viewBox="0 0 16 16"><path d="M1 8H15" stroke="#d8d8d8" stroke-width="1.4" fill="none"/></svg>
<svg style="left:1965.6px;top:10.4px;width:15.2px;height:15.2px;" viewBox="0 0 19 19"><path d="M0.9 7.6H13.6V16.4H0.9Z M4.3 7.6V3.2H17.1V13.3H13.6" stroke="#d8d8d8" stroke-width="1.4" fill="none"/></svg>
<svg style="left:2016.8px;top:11.6px;width:12.8px;height:12.8px;" viewBox="0 0 16 16"><path d="M1.5 1.5L14.5 14.5M14.5 1.5L1.5 14.5" stroke="#d8d8d8" stroke-width="1.4" fill="none"/></svg>
<div style="left:0px;top:41.04px;width:2048px;height:34.96px;background:#2d2e33;"></div>
<div style="left:0px;top:75.6px;width:2048px;height:1.04px;background:#232427;"></div>
<div style="left:81.28px;top:42px;width:1.12px;height:33.2px;background:#25262a;"></div>
<div style="left:158.08px;top:42px;width:1.12px;height:33.2px;background:#25262a;"></div>
<div style="left:235.04px;top:42px;width:1.12px;height:33.2px;background:#25262a;"></div>
<svg style="left:15.84px;top:51.84px;width:10.4px;height:12.96px;" viewBox="0 0 14 17"><path d="M1 1H9L13 5V16H1Z M9 1V5H13" stroke="#cfcfcf" stroke-width="1.5" fill="none" stroke-linejoin="round"/><path d="M3.8 8.5H10.2M3.8 12H10.2" stroke="#cfcfcf" stroke-width="1.5"/></svg>
<span class="t" style="top:49.888px;height:17.024px;line-height:17.024px;font-size:12.160px;color:#e4e4e4;left:33.6px;">项目</span>
<svg style="left:64px;top:55.84px;width:9.6px;height:6.4px;" viewBox="0 0 12 8"><path d="M1 1L6 6.5L11 1" stroke="#c4c4c4" stroke-width="1.25" fill="none"/></svg>
<svg style="left:92.96px;top:51.84px;width:9.6px;height:12.96px;" viewBox="0 0 13 17"><ellipse cx="6.5" cy="3.6" rx="5.3" ry="2.6" stroke="#cfcfcf" stroke-width="1.5" fill="none"/><path d="M1.2 3.6V13.2C1.2 14.8 3.6 16 6.5 16S11.8 14.8 11.8 13.2V3.6M1.2 8.4C1.2 10 3.6 11.2 6.5 11.2S11.8 10 11.8 8.4" stroke="#cfcfcf" stroke-width="1.5" fill="none"/></svg>
<span class="t" style="top:49.888px;height:17.024px;line-height:17.024px;font-size:12.160px;color:#e4e4e4;left:110.4px;">数据</span>
<svg style="left:141.2px;top:55.84px;width:9.6px;height:6.4px;" viewBox="0 0 12 8"><path d="M1 1L6 6.5L11 1" stroke="#c4c4c4" stroke-width="1.25" fill="none"/></svg>
<svg style="left:168.8px;top:52px;width:12.8px;height:12.8px;" viewBox="0 0 16 16"><path d="M1 1H6.3V6.3H1ZM9.7 1H15V6.3H9.7ZM1 9.7H6.3V15H1ZM9.7 9.7H15V15H9.7Z" stroke="#cfcfcf" stroke-width="1.6" fill="none"/></svg>
<span class="t" style="top:49.888px;height:17.024px;line-height:17.024px;font-size:12.160px;color:#e4e4e4;left:188px;">操作</span>
<svg style="left:218px;top:55.84px;width:9.6px;height:6.4px;" viewBox="0 0 12 8"><path d="M1 1L6 6.5L11 1" stroke="#c4c4c4" stroke-width="1.25" fill="none"/></svg>
<svg style="left:1852.56px;top:51.04px;width:17.6px;height:17.6px;" viewBox="0 0 22 22"><circle cx="10" cy="10" r="8" stroke="#ececec" stroke-width="1.8" fill="none"/><path d="M15.8 15.8L20.5 20.5" stroke="#ececec" stroke-width="1.9" stroke-linecap="round"/></svg>
<div style="left:1886.4px;top:45.6px;width:68px;height:26.4px;background:#1d8ffd;border-radius:3px;"></div>
<svg style="left:1896.8px;top:52px;width:13.6px;height:12.8px;" viewBox="0 0 17 16"><path d="M16.5 0.5L0.5 7.2L5.2 9.2L13 3.5L7 10.3V15.2L9.8 11.6L13.2 13.4Z" fill="#fff"/></svg>
<span class="t" style="top:50.128px;height:17.024px;line-height:17.024px;font-size:12.160px;color:#ffffff;left:1914.4px;">发布</span>
<div style="left:1963.2px;top:44.8px;width:81.6px;height:27.6px;background:#2a2b2f;border:1px solid #505156;border-radius:5px;"></div>
<svg style="left:1976px;top:52.8px;width:12px;height:12px;" viewBox="0 0 15 15"><path d="M1 5V1H5M10 1H14V5M14 10V14H10M5 14H1V10" stroke="#e0e0e0" stroke-width="1.5" fill="none"/></svg>
<span class="t" style="top:50.128px;height:17.024px;line-height:17.024px;font-size:12.160px;color:#ececec;left:1992.8px;">预览</span>
<svg style="left:2027.2px;top:55.6px;width:11.2px;height:7.2px;" viewBox="0 0 14 9"><path d="M1.2 1.2L7 7.2L12.8 1.2" stroke="#e0e0e0" stroke-width="1.8" fill="none"/></svg>
<div style="left:0.96px;top:76.64px;width:4px;height:1028px;background:#2c2d32;"></div>
<div style="left:4.8px;top:76.64px;width:200px;height:1028px;background:#252629;"></div>
<div style="left:4.8px;top:76.64px;width:200px;height:35.36px;background:#37383e;"></div>
<div style="left:204.8px;top:76.64px;width:1.04px;height:1028px;background:#1f2023;"></div>
<svg style="left:12px;top:88.32px;width:13.6px;height:12.8px;" viewBox="0 0 17 16"><path d="M8.5 1.2L15.8 5.6L8.5 10L1.2 5.6Z" stroke="#e8e8e8" stroke-width="1.6" fill="none" stroke-linejoin="round"/><path d="M1.2 9.6L8.5 14L15.8 9.6" stroke="#e8e8e8" stroke-width="1.6" fill="none" stroke-linejoin="round" stroke-linecap="round"/></svg>
<span class="t b" style="top:86.48px;height:16.8px;line-height:16.8px;font-size:12.000px;color:#ececec;left:30px;">看板图层</span>
<svg style="left:10.4px;top:122px;width:5.6px;height:8.4px;" viewBox="0 0 7 10.5"><path d="M0 0L6.6 5.2L0 10.4Z" fill="#8c9097"/></svg>
<svg style="left:23.36px;top:122.24px;width:11.84px;height:10.56px;" viewBox="0 0 15.5 14"><path d="M0.8 0.8H14.7V13.2H0.8Z" stroke="#8b8c8e" stroke-width="1.5" fill="none"/><path d="M3.2 3.3H12V6.7H3.2Z M6 6.7H12.6V10.6H6Z" stroke="#8b8c8e" stroke-width="1.3" fill="none"/></svg>
<span class="t" style="top:118.208px;height:17.024px;line-height:17.024px;font-size:12.160px;color:#e2e2e2;left:38.56px;">分组面板</span>
<div style="left:4.8px;top:140px;width:200px;height:28px;background:#354f77;"></div>
<svg style="left:23.36px;top:150.24px;width:11.84px;height:10.56px;" viewBox="0 0 15.5 14"><path d="M0.8 0.8H14.7V13.2H0.8Z M0.8 3.2H14.7" stroke="#8d94a3" stroke-width="1.4" fill="none"/><path d="M5.2 5.6L2.8 8.2L5.2 10.8 M10.3 5.6L12.7 8.2L10.3 10.8 M8.7 5.2L6.9 11.2" stroke="#8d94a3" stroke-width="1.1" fill="none"/></svg>
<span class="t" style="top:147.04px;height:16.8px;line-height:16.8px;font-size:12.000px;color:#dcdcdc;left:39.36px;transform:scaleX(0.97);transform-origin:0 50%;">iframe</span>
<div style="left:205.84px;top:76.64px;width:49.12px;height:1028px;background:#2d2e33;"></div>
<svg style="left:221.6px;top:89.12px;width:17.6px;height:17.6px;" viewBox="0 0 22 22"><rect x="1.8" y="8.2" width="3.8" height="11.5" fill="#a9a9a9"/><rect x="6.3" y="0.3" width="4.4" height="19.4" fill="#ffffff"/><rect x="11.9" y="5.2" width="3.5" height="14.5" fill="#a9a9a9"/><rect x="16.6" y="10.3" width="3.8" height="9.4" fill="#ffffff"/><rect x="0" y="19.3" width="22" height="2.7" fill="#ffffff"/></svg>
<span class="t" style="top:107.12px;height:16.8px;line-height:16.8px;font-size:12.000px;color:#e6e6e6;left:230.64px;transform:translateX(-50%);">图表</span>
<svg style="left:221.6px;top:151.52px;width:17.6px;height:17.6px;" viewBox="0 0 22 22"><path d="M11 0.5L14.5 8L21.5 6.2L19.2 15.8H2.8L0.5 6.2L7.5 8Z" fill="#ffffff"/><path d="M0.5 6.2L7.5 8L6 15.8H2.8Z M21.5 6.2L14.5 8L16 15.8H19.2Z" fill="#dcdcdc"/><rect x="0.5" y="17.6" width="21" height="2.4" fill="#a9a9a9"/></svg>
<span class="t" style="top:167.12px;height:16.8px;line-height:16.8px;font-size:12.000px;color:#e6e6e6;left:230.64px;transform:translateX(-50%);">文本</span>
<svg style="left:221.6px;top:209.12px;width:17.6px;height:17.6px;" viewBox="0 0 22 22"><circle cx="5.8" cy="5.2" r="2.6" fill="none" stroke="#ffffff" stroke-width="1.8"/><circle cx="11.8" cy="3.8" r="3.4" fill="none" stroke="#ffffff" stroke-width="1.9"/><rect x="0.5" y="7.2" width="16.5" height="13.5" rx="1" fill="#ffffff"/><path d="M17 11.5L21.5 9.2V19L17 16.6Z" fill="#dcdcdc"/><path d="M6.2 9.8L12.2 13.4L6.2 17Z" fill="#a9a9a9"/></svg>
<span class="t" style="top:227.12px;height:16.8px;line-height:16.8px;font-size:12.000px;color:#e6e6e6;left:230.64px;transform:translateX(-50%);">媒体</span>
<svg style="left:221.6px;top:269.92px;width:17.6px;height:17.6px;" viewBox="0 0 22 22"><rect x="3.6" y="2.6" width="18" height="14.8" rx="2.2" fill="#a9a9a9"/><rect x="0.4" y="0.4" width="18" height="18.8" rx="2.6" fill="#a9a9a9"/><rect x="2" y="2.2" width="17.8" height="15.4" rx="2" fill="#c6c6c6"/><rect x="4.4" y="5" width="2.2" height="2.2" fill="#ffffff"/><rect x="8" y="5" width="10" height="2.2" fill="#ffffff"/><rect x="4.4" y="8.8" width="2.2" height="2.2" fill="#ffffff"/><rect x="8" y="8.8" width="10" height="2.2" fill="#ffffff"/><rect x="4.4" y="12.6" width="2.2" height="2.2" fill="#ffffff"/><rect x="8" y="12.6" width="10" height="2.2" fill="#ffffff"/></svg>
<span class="t" style="top:287.12px;height:16.8px;line-height:16.8px;font-size:12.000px;color:#e6e6e6;left:230.64px;transform:translateX(-50%);">控件</span>
<svg style="left:221.6px;top:329.12px;width:17.6px;height:17.6px;" viewBox="0 0 22 22"><path d="M0.3 2.4L7.4 0.2V19.6L0.3 21.8Z" fill="#a9a9a9"/><path d="M7.4 0.2L14.6 2.4V21.8L7.4 19.6Z" fill="#c2c2c2"/><path d="M14.6 2.4L21.7 0.2V19.6L14.6 21.8Z" fill="#a9a9a9"/><path d="M2 7.2C3.5 5.4 6.2 5.8 8.2 6.6C10 5.2 12.6 6.4 14.4 6C15.4 4.4 17.6 3.6 18.6 4.4C17.8 5.6 19.4 6 19 7.4C17.6 8 18.4 9.8 17.8 11.4C17.2 13.4 15.2 14.8 13 15C11.8 16.2 10.4 16.6 9.6 15.8C9 14.4 7.2 14.8 6 13.8C4.6 12.8 4.8 11 3.4 10.4C2.2 9.6 1.6 8.4 2 7.2Z" fill="#ffffff"/></svg>
<span class="t" style="top:347.12px;height:16.8px;line-height:16.8px;font-size:12.000px;color:#e6e6e6;left:230.64px;transform:translateX(-50%);">地图</span>
<svg style="left:221.6px;top:388.72px;width:17.6px;height:17.6px;" viewBox="0 0 22 22"><path d="M11 0.3L20.6 5.3L11 10.4L1.4 5.3Z" fill="#a9a9a9"/><path d="M1.4 5.3L11 10.4V21.8L1.4 16.4Z" fill="#dcdcdc"/><path d="M20.6 5.3L11 10.4V21.8L20.6 16.4Z" fill="#ffffff"/></svg>
<span class="t" style="top:405.92px;height:16.8px;line-height:16.8px;font-size:12.000px;color:#e6e6e6;left:230.64px;transform:translateX(-50%) scaleX(0.9);">3D</span>
<svg style="left:221.6px;top:450.72px;width:17.6px;height:17.6px;" viewBox="0 0 22 22"><path d="M11 3.4C9.2 3.4 8 2.2 7.6 0.6L5.6 1L0.2 8.4L4.6 11V19.6H11Z" fill="#d6d6d6"/><path d="M11 3.4C12.8 3.4 14 2.2 14.4 0.6L16.4 1L21.8 8.4L17.4 11V19.6H11Z" fill="#a9a9a9"/></svg>
<span class="t" style="top:467.12px;height:16.8px;line-height:16.8px;font-size:12.000px;color:#e6e6e6;left:230.64px;transform:translateX(-50%);">套件</span>
<svg style="left:221.6px;top:509.12px;width:17.6px;height:17.6px;" viewBox="0 0 22 22"><path d="M0.8 4.6H5.4C4.6 2.2 6 0.4 8.2 0.4S11.8 2.2 11 4.6H16.4V9.6C18.6 8.8 21.4 9.8 21.4 12.4S18.6 16 16.4 15.2V20.6H11.2C11.8 18.6 10.6 17.2 8.6 17.2S5.4 18.6 6 20.6H0.8V14.6C2.8 15.4 4.6 14.4 4.6 12.4S2.8 9.4 0.8 10.2Z" fill="#ffffff"/></svg>
<span class="t" style="top:527.12px;height:16.8px;line-height:16.8px;font-size:12.000px;color:#e6e6e6;left:230.64px;transform:translateX(-50%);">本地</span>
<svg style="left:221.6px;top:569.12px;width:17.6px;height:17.6px;" viewBox="0 0 22 22"><rect x="1.8" y="8.2" width="3.8" height="11.5" fill="#a9a9a9"/><rect x="6.3" y="0.3" width="4.4" height="19.4" fill="#ffffff"/><rect x="11.9" y="5.2" width="3.5" height="14.5" fill="#a9a9a9"/><rect x="16.6" y="10.3" width="3.8" height="9.4" fill="#ffffff"/><rect x="0" y="19.3" width="22" height="2.7" fill="#ffffff"/></svg>
<span class="t" style="top:587.12px;height:16.8px;line-height:16.8px;font-size:12.000px;color:#e6e6e6;left:230.64px;transform:translateX(-50%);">默认</span>
<div style="left:1747.2px;top:76.64px;width:300.8px;height:1028px;background:#242528;"></div>
<div style="left:1747.2px;top:76.64px;width:300.8px;height:41.12px;background:#2d2e33;"></div>
<div style="left:1747.2px;top:117.76px;width:300.8px;height:1.2px;background:#26272b;"></div>
<span class="t" style="top:88.048px;height:18.144px;line-height:18.144px;font-size:12.960px;color:#dedede;left:1776.8px;">当前状态：默认状态</span>
<svg style="left:1994.8px;top:89.2px;width:13.6px;height:13.6px;" viewBox="0 0 17 17"><path d="M8.5 0.5V16.5M0.5 8.5H16.5" stroke="#ededed" stroke-width="2" fill="none"/></svg>
<svg style="left:2024px;top:92.8px;width:5.6px;height:8px;" viewBox="0 0 7 10"><path d="M1 0.8L5.6 5L1 9.2" stroke="#77787c" stroke-width="1.2" fill="none"/></svg>
<div style="left:1747.2px;top:118.8px;width:300.8px;height:33.6px;background:#37383e;"></div>
<span class="t" style="top:127.008px;height:17.024px;line-height:17.024px;font-size:12.160px;color:#e6e6e6;left:1764.8px;">样式</span>
<span class="t" style="top:127.008px;height:17.024px;line-height:17.024px;font-size:12.160px;color:#dadada;left:1804.8px;">交互</span>
<span class="t" style="top:127.008px;height:17.024px;line-height:17.024px;font-size:12.160px;color:#dadada;left:1844.8px;">数据</span>
<span class="t" style="top:127.008px;height:17.024px;line-height:17.024px;font-size:12.160px;color:#dadada;left:1884.8px;">代码</span>
<span class="t" style="top:127.008px;height:17.024px;line-height:17.024px;font-size:12.160px;color:#dadada;left:1924.8px;">更多</span>
<div style="left:1756.8px;top:150.88px;width:40px;height:1.76px;background:#1890ff;"></div>
<span class="t" style="top:161.24px;height:19.6px;line-height:19.6px;font-size:14.000px;color:#ffffff;left:1757.2px;transform:scaleX(0.97);transform-origin:0 50%;-webkit-text-stroke:0.25px #fff;">iframe</span>
<span class="t" style="top:162.64px;height:16.8px;line-height:16.8px;font-size:12.000px;color:#a9a9a9;left:1800.8px;transform:scaleX(0.77);transform-origin:0 50%;">v0.1.0</span>
<div style="left:1976.8px;top:159.2px;width:58.4px;height:20px;background:#0d8bff;border-radius:3px;"></div>
<span class="t" style="top:160.88px;height:16.8px;line-height:16.8px;font-size:12.000px;color:#ffffff;left:2006px;transform:translateX(-50%);">查看教程</span>
<span class="t" style="top:180.4px;height:16.8px;line-height:16.8px;font-size:12.000px;color:#9c9c9c;left:1757.2px;transform:scaleX(0.993);transform-origin:0 50%;">E:\Work\code\client3\client\dist\addons\widgets\basic</span>
<span class="t" style="top:192.4px;height:16.8px;line-height:16.8px;font-size:12.000px;color:#9c9c9c;left:1757.2px;transform:scaleX(0.993);transform-origin:0 50%;">_iframe</span>
<div style="left:1747.2px;top:216.8px;width:300.8px;height:40px;background:#37383e;"></div><svg style="left:1759.2px;top:235.2px;width:9.2px;height:6px;" viewBox="0 0 11.5 7.5"><path d="M0 0H11.5L5.75 7.5Z" fill="#e2e2e2"/></svg><span class="t b" style="top:228.24px;height:16.8px;line-height:16.8px;font-size:12.000px;color:#ececec;left:1777.2px;">基本设置</span>
<svg style="left:2026.64px;top:229.44px;width:4px;height:14.72px;" viewBox="0 0 5 18.4"><circle cx="2.5" cy="2.5" r="2.3" fill="#e2e2e2"/><circle cx="2.5" cy="9.2" r="2.3" fill="#e2e2e2"/><circle cx="2.5" cy="15.9" r="2.3" fill="#e2e2e2"/></svg>
<span class="t" style="top:265.6px;height:16.8px;line-height:16.8px;font-size:12.000px;color:#e0e0e0;left:1752px;">不透明度</span>
<div style="left:1852px;top:271.44px;width:110.4px;height:5.92px;background:#0d8bff;border-radius:4px;"></div>
<div style="left:1955.68px;top:267.68px;width:13.44px;height:13.44px;background:#fff;border:2.2px solid #0d8bff;border-radius:50%;"></div>
<div style="left:1972.8px;top:262.56px;width:64px;height:23.68px;background:#1b1c1f;border:1px solid #4a4b50;border-radius:3px;"></div>
<span class="t" style="top:265.4px;height:17.36px;line-height:17.36px;font-size:12.400px;color:#f0f0f0;left:2000.4px;transform:translateX(-50%) scaleX(0.8);-webkit-text-stroke:0.3px #f0f0f0;">100</span>
<span class="t" style="top:265.28px;height:17.92px;line-height:17.92px;font-size:12.800px;color:#a6a6a6;left:2028.4px;transform:translateX(-50%) scaleX(0.82);">%</span>
<span class="t" style="top:299.6px;height:16.8px;line-height:16.8px;font-size:12.000px;color:#e0e0e0;left:1752px;">数据源选择</span>
<div style="left:1852px;top:297.04px;width:92.8px;height:22.24px;background:#1b1c1f;border:1px solid #45464b;border-right:none;border-radius:5px 0 0 5px;"></div>
<div style="left:1944px;top:297.04px;width:92.8px;height:22.24px;background:#0d8bff;border-radius:0 5px 5px 0;"></div>
<span class="t" style="top:299.36px;height:16.8px;line-height:16.8px;font-size:12.000px;color:#e6e6e6;left:1898px;transform:translateX(-50%) scaleX(0.915);">iframe地址</span>
<span class="t" style="top:299.36px;height:16.8px;line-height:16.8px;font-size:12.000px;color:#ffffff;left:1990.4px;transform:translateX(-50%) scaleX(0.93);">文件夹地址</span>
<span class="t" style="top:333.6px;height:16.8px;line-height:16.8px;font-size:12.000px;color:#e0e0e0;left:1752px;">文件夹地址</span>
<div style="left:1852px;top:330.72px;width:164px;height:23.52px;background:#1b1c1f;border:1px solid #4a4b50;border-radius:3px;"></div>
<span class="t" style="top:334.56px;height:16.8px;line-height:16.8px;font-size:12.000px;color:#ececec;left:1863.2px;transform:scaleX(0.965);transform-origin:0 50%;">resources/iframe二开示</span>
<svg style="left:1994.4px;top:337.2px;width:9.6px;height:9.6px;" viewBox="0 0 12 12"><path d="M1 1L11 11M11 1L1 11" stroke="#a8a8a8" stroke-width="1.4" fill="none"/></svg>
<svg style="left:2021.2px;top:335.6px;width:15.2px;height:13.6px;" viewBox="0 0 19 17"><path d="M1 1H7L9 3.6H18V16H1Z" stroke="#dadada" stroke-width="1.5" fill="none" stroke-linejoin="round"/></svg>
<span class="t" style="top:367.6px;height:16.8px;line-height:16.8px;font-size:12.000px;color:#e0e0e0;left:1752px;transform:scaleX(0.9);transform-origin:0 50%;">sandbox</span>
<div style="left:1854.4px;top:371.84px;width:20.8px;height:7.52px;background:#c9cdd7;border-radius:5px;"></div><div style="left:1852px;top:369.84px;width:11.52px;height:11.52px;background:#fff;border-radius:50%;"></div><div style="left:1854.8px;top:372.64px;width:5.92px;height:5.92px;border:1.5px solid #c6cad4;border-radius:50%;"></div>
<span class="t" style="top:401.6px;height:16.8px;line-height:16.8px;font-size:12.000px;color:#e0e0e0;left:1752px;">开启麦克风</span>
<div style="left:1854.4px;top:405.84px;width:20.8px;height:7.52px;background:#c9cdd7;border-radius:5px;"></div><div style="left:1852px;top:403.84px;width:11.52px;height:11.52px;background:#fff;border-radius:50%;"></div><div style="left:1854.8px;top:406.64px;width:5.92px;height:5.92px;border:1.5px solid #c6cad4;border-radius:50%;"></div>
<span class="t" style="top:435.6px;height:16.8px;line-height:16.8px;font-size:12.000px;color:#e0e0e0;left:1752px;">视频输入</span>
<div style="left:1854.4px;top:439.84px;width:20.8px;height:7.52px;background:#c9cdd7;border-radius:5px;"></div><div style="left:1852px;top:437.84px;width:11.52px;height:11.52px;background:#fff;border-radius:50%;"></div><div style="left:1854.8px;top:440.64px;width:5.92px;height:5.92px;border:1.5px solid #c6cad4;border-radius:50%;"></div>
<div style="left:1747.2px;top:462.4px;width:300.8px;height:40px;background:#37383e;"></div><svg style="left:1759.2px;top:480.8px;width:9.2px;height:6px;" viewBox="0 0 11.5 7.5"><path d="M0 0H11.5L5.75 7.5Z" fill="#e2e2e2"/></svg><span class="t b" style="top:473.84px;height:16.8px;line-height:16.8px;font-size:12.000px;color:#ececec;left:1777.2px;">大小&amp;位置</span>
<svg style="left:2022px;top:473.6px;width:12.8px;height:15.2px;" viewBox="0 0 16 19"><path d="M4.2 8V5.2C4.2 2.8 5.8 1 8 1S11.8 2.8 11.8 5.2V8" stroke="#d6d6d6" stroke-width="1.5" fill="none"/><rect x="1" y="8" width="14" height="10" rx="1.6" stroke="#d6d6d6" stroke-width="1.5" fill="none"/><path d="M8 11.4V14.6" stroke="#d6d6d6" stroke-width="1.6"/></svg>
<span class="t" style="top:510.4px;height:16.8px;line-height:16.8px;font-size:12.000px;color:#e0e0e0;left:1752px;">组件大小</span>
<div style="left:1852px;top:507.36px;width:90.4px;height:23.68px;background:#1b1c1f;border:1px solid #4a4b50;border-radius:3px;"></div><div style="left:1852.96px;top:508.32px;width:19.2px;height:21.76px;background:#27282c;border-right:1px solid #45464b;border-radius:2px 0 0 2px;"></div><span class="t" style="top:510.76px;height:17.36px;line-height:17.36px;font-size:12.400px;color:#a9a9a9;left:1862.56px;transform:translateX(-50%) scaleX(0.85);">W</span><span class="t" style="top:510.2px;height:17.36px;line-height:17.36px;font-size:12.400px;color:#f0f0f0;left:1878px;transform:scaleX(0.82);transform-origin:0 50%;-webkit-text-stroke:0.3px #f0f0f0;">800</span><span class="t" style="top:510.56px;height:16.8px;line-height:16.8px;font-size:12.000px;color:#a6a6a6;right:110.8px;transform:scaleX(0.88);transform-origin:100% 50%;">px</span>
<div style="left:1946.4px;top:507.36px;width:90.4px;height:23.68px;background:#1b1c1f;border:1px solid #4a4b50;border-radius:3px;"></div><div style="left:1947.36px;top:508.32px;width:17.6px;height:21.76px;background:#27282c;border-right:1px solid #45464b;border-radius:2px 0 0 2px;"></div><span class="t" style="top:510.76px;height:17.36px;line-height:17.36px;font-size:12.400px;color:#a9a9a9;left:1956.16px;transform:translateX(-50%) scaleX(0.85);">H</span><span class="t" style="top:510.2px;height:17.36px;line-height:17.36px;font-size:12.400px;color:#f0f0f0;left:1970.8px;transform:scaleX(0.82);transform-origin:0 50%;-webkit-text-stroke:0.3px #f0f0f0;">900</span><span class="t" style="top:510.56px;height:16.8px;line-height:16.8px;font-size:12.000px;color:#a6a6a6;right:16.4px;transform:scaleX(0.88);transform-origin:100% 50%;">px</span>
<span class="t" style="top:544.4px;height:16.8px;line-height:16.8px;font-size:12.000px;color:#e0e0e0;left:1752px;">组件位置</span>
<div style="left:1852px;top:541.36px;width:90.4px;height:23.68px;background:#1b1c1f;border:1px solid #4a4b50;border-radius:3px;"></div><div style="left:1852.96px;top:542.32px;width:16.8px;height:21.76px;background:#27282c;border-right:1px solid #45464b;border-radius:2px 0 0 2px;"></div><span class="t" style="top:544.76px;height:17.36px;line-height:17.36px;font-size:12.400px;color:#a9a9a9;left:1861.36px;transform:translateX(-50%) scaleX(0.85);">X</span><span class="t" style="top:544.2px;height:17.36px;line-height:17.36px;font-size:12.400px;color:#f0f0f0;left:1875.6px;transform:scaleX(0.82);transform-origin:0 50%;-webkit-text-stroke:0.3px #f0f0f0;">85</span><span class="t" style="top:544.56px;height:16.8px;line-height:16.8px;font-size:12.000px;color:#a6a6a6;right:110.8px;transform:scaleX(0.88);transform-origin:100% 50%;">px</span>
<div style="left:1946.4px;top:541.36px;width:90.4px;height:23.68px;background:#1b1c1f;border:1px solid #4a4b50;border-radius:3px;"></div><div style="left:1947.36px;top:542.32px;width:16px;height:21.76px;background:#27282c;border-right:1px solid #45464b;border-radius:2px 0 0 2px;"></div><span class="t" style="top:544.76px;height:17.36px;line-height:17.36px;font-size:12.400px;color:#a9a9a9;left:1955.36px;transform:translateX(-50%) scaleX(0.85);">Y</span><span class="t" style="top:544.2px;height:17.36px;line-height:17.36px;font-size:12.400px;color:#f0f0f0;left:1969.2px;transform:scaleX(0.82);transform-origin:0 50%;-webkit-text-stroke:0.3px #f0f0f0;">90</span><span class="t" style="top:544.56px;height:16.8px;line-height:16.8px;font-size:12.000px;color:#a6a6a6;right:16.4px;transform:scaleX(0.88);transform-origin:100% 50%;">px</span>
<span class="t" style="top:578.4px;height:16.8px;line-height:16.8px;font-size:12.000px;color:#e0e0e0;left:1752px;">组件旋转</span>
<div style="left:1852px;top:575.36px;width:59.2px;height:23.68px;background:#1b1c1f;border:1px solid #4a4b50;border-radius:3px;"></div><div style="left:1852.96px;top:576.32px;width:16.8px;height:21.76px;background:#27282c;border-right:1px solid #45464b;border-radius:2px 0 0 2px;"></div><span class="t" style="top:578.76px;height:17.36px;line-height:17.36px;font-size:12.400px;color:#a9a9a9;left:1861.36px;transform:translateX(-50%) scaleX(0.85);">X</span><span class="t" style="top:578.2px;height:17.36px;line-height:17.36px;font-size:12.400px;color:#f0f0f0;left:1875.6px;transform:scaleX(0.82);transform-origin:0 50%;-webkit-text-stroke:0.3px #f0f0f0;">0</span><div style="left:1901.92px;top:583.04px;width:3.68px;height:3.68px;border:1.1px solid #a6a6a6;border-radius:50%;"></div>
<div style="left:1914.96px;top:575.36px;width:59.2px;height:23.68px;background:#1b1c1f;border:1px solid #4a4b50;border-radius:3px;"></div><div style="left:1915.92px;top:576.32px;width:16px;height:21.76px;background:#27282c;border-right:1px solid #45464b;border-radius:2px 0 0 2px;"></div><span class="t" style="top:578.76px;height:17.36px;line-height:17.36px;font-size:12.400px;color:#a9a9a9;left:1923.92px;transform:translateX(-50%) scaleX(0.85);">Y</span><span class="t" style="top:578.2px;height:17.36px;line-height:17.36px;font-size:12.400px;color:#f0f0f0;left:1937.76px;transform:scaleX(0.82);transform-origin:0 50%;-webkit-text-stroke:0.3px #f0f0f0;">0</span><div style="left:1964.88px;top:583.04px;width:3.68px;height:3.68px;border:1.1px solid #a6a6a6;border-radius:50%;"></div>
<div style="left:1977.6px;top:575.36px;width:59.2px;height:23.68px;background:#1b1c1f;border:1px solid #4a4b50;border-radius:3px;"></div><div style="left:1978.56px;top:576.32px;width:16.8px;height:21.76px;background:#27282c;border-right:1px solid #45464b;border-radius:2px 0 0 2px;"></div><span class="t" style="top:578.76px;height:17.36px;line-height:17.36px;font-size:12.400px;color:#a9a9a9;left:1986.96px;transform:translateX(-50%) scaleX(0.85);">Z</span><span class="t" style="top:578.2px;height:17.36px;line-height:17.36px;font-size:12.400px;color:#f0f0f0;left:2001.2px;transform:scaleX(0.82);transform-origin:0 50%;-webkit-text-stroke:0.3px #f0f0f0;">0</span><div style="left:2027.52px;top:583.04px;width:3.68px;height:3.68px;border:1.1px solid #a6a6a6;border-radius:50%;"></div>
<div style="left:1747.2px;top:604.8px;width:300.8px;height:40px;background:#37383e;"></div><svg style="left:1759.2px;top:623.2px;width:9.2px;height:6px;" viewBox="0 0 11.5 7.5"><path d="M0 0H11.5L5.75 7.5Z" fill="#e2e2e2"/></svg><span class="t b" style="top:616.24px;height:16.8px;line-height:16.8px;font-size:12.000px;color:#ececec;left:1777.2px;">边框设置</span>
<div style="left:1992.8px;top:621.44px;width:20.8px;height:7.52px;background:#1890ff;border-radius:5px;"></div><div style="left:2004.48px;top:619.44px;width:11.52px;height:11.52px;background:#fff;border-radius:50%;"></div><div style="left:2009.76px;top:622.64px;width:1.12px;height:5.12px;background:#1890ff;"></div>
<svg style="left:2026.64px;top:616.64px;width:4px;height:14.72px;" viewBox="0 0 5 18.4"><circle cx="2.5" cy="2.5" r="2.3" fill="#e2e2e2"/><circle cx="2.5" cy="9.2" r="2.3" fill="#e2e2e2"/><circle cx="2.5" cy="15.9" r="2.3" fill="#e2e2e2"/></svg>
<span class="t" style="top:653.2px;height:16.8px;line-height:16.8px;font-size:12.000px;color:#e0e0e0;left:1752px;">边框颜色</span>
<div style="left:1852px;top:650.16px;width:40px;height:23.68px;background:#1b1c1f;border:1px solid #45464b;border-radius:4px;"></div>
<div style="left:1858.4px;top:654.8px;width:14.72px;height:14.72px;background:#cdcdcd;"></div>
<svg style="left:1876px;top:660px;width:8.8px;height:5.2px;" viewBox="0 0 11 6.5"><path d="M0 0H11L5.5 6.5Z" fill="#ececec"/></svg>
<span class="t" style="top:687.2px;height:16.8px;line-height:16.8px;font-size:12.000px;color:#e0e0e0;left:1752px;">边框宽度</span>
<div style="left:1852px;top:684.16px;width:184.8px;height:23.68px;background:#1b1c1f;border:1px solid #4a4b50;border-radius:3px;"></div>
<span class="t" style="top:687px;height:17.36px;line-height:17.36px;font-size:12.400px;color:#f0f0f0;left:1859.2px;transform:scaleX(0.82);transform-origin:0 50%;-webkit-text-stroke:0.3px #f0f0f0;">1</span>
<span class="t" style="top:687.36px;height:16.8px;line-height:16.8px;font-size:12.000px;color:#a6a6a6;right:16.8px;transform:scaleX(0.88);transform-origin:100% 50%;">px</span>
<span class="t" style="top:721.2px;height:16.8px;line-height:16.8px;font-size:12.000px;color:#e0e0e0;left:1752px;">圆角半径</span>
<div style="left:1852px;top:718.16px;width:184.8px;height:23.68px;background:#1b1c1f;border:1px solid #4a4b50;border-radius:3px;"></div>
<span class="t" style="top:721px;height:17.36px;line-height:17.36px;font-size:12.400px;color:#f0f0f0;left:1859.2px;transform:scaleX(0.82);transform-origin:0 50%;-webkit-text-stroke:0.3px #f0f0f0;">0</span>
<span class="t" style="top:721.36px;height:16.8px;line-height:16.8px;font-size:12.000px;color:#a6a6a6;right:16.8px;transform:scaleX(0.88);transform-origin:100% 50%;">px</span>
<span class="t" style="top:755.2px;height:16.8px;line-height:16.8px;font-size:12.000px;color:#e0e0e0;left:1752px;">边框样式</span>
<div style="left:1852px;top:752.8px;width:184.8px;height:22.24px;background:#1b1c1f;border:1px solid #45464b;border-radius:5px;"></div>
<div style="left:1852px;top:752.8px;width:46.4px;height:22.24px;background:#0d8bff;border-radius:5px 0 0 5px;"></div>
<div style="left:1944.4px;top:753.6px;width:0.96px;height:20.64px;background:#45464b;"></div>
<div style="left:1990.24px;top:753.6px;width:0.96px;height:20.64px;background:#45464b;"></div>
<span class="t" style="top:755.184px;height:16.352px;line-height:16.352px;font-size:11.680px;color:#fff;left:1875.2px;transform:translateX(-50%) scaleX(0.95);">实线</span>
<span class="t" style="top:755.184px;height:16.352px;line-height:16.352px;font-size:11.680px;color:#e6e6e6;left:1921.2px;transform:translateX(-50%) scaleX(0.95);">虚线</span>
<span class="t" style="top:755.408px;height:15.904px;line-height:15.904px;font-size:11.360px;color:#e6e6e6;left:1967.2px;transform:translateX(-50%) scaleX(0.95);">点状线</span>
<span class="t" style="top:755.408px;height:15.904px;line-height:15.904px;font-size:11.360px;color:#e6e6e6;left:2013.6px;transform:translateX(-50%) scaleX(0.95);">无边框</span>
<div style="left:1747.2px;top:782.4px;width:300.8px;height:40px;background:#37383e;"></div><svg style="left:1761.2px;top:797.92px;width:6px;height:8.96px;" viewBox="0 0 7.5 11.2"><path d="M0 0L7.5 5.6L0 11.2Z" fill="#8f9094"/></svg><span class="t b" style="top:793.84px;height:16.8px;line-height:16.8px;font-size:12.000px;color:#8f9094;left:1777.2px;">背景设置</span>
<div style="left:1994.4px;top:798.64px;width:20.8px;height:7.52px;background:#c9cdd7;border-radius:5px;"></div><div style="left:1992px;top:796.64px;width:11.52px;height:11.52px;background:#fff;border-radius:50%;"></div><div style="left:1994.8px;top:799.44px;width:5.92px;height:5.92px;border:1.5px solid #c6cad4;border-radius:50%;"></div>
<svg style="left:2026.64px;top:794.24px;width:4px;height:14.72px;" viewBox="0 0 5 18.4"><circle cx="2.5" cy="2.5" r="2.3" fill="#77787c"/><circle cx="2.5" cy="9.2" r="2.3" fill="#77787c"/><circle cx="2.5" cy="15.9" r="2.3" fill="#77787c"/></svg>
<div style="left:1747.2px;top:822.4px;width:300.8px;height:1.2px;background:#2a2b2f;"></div>
<div style="left:1747.2px;top:823.6px;width:300.8px;height:40px;background:#37383e;"></div><svg style="left:1761.2px;top:839.12px;width:6px;height:8.96px;" viewBox="0 0 7.5 11.2"><path d="M0 0L7.5 5.6L0 11.2Z" fill="#e2e2e2"/></svg><span class="t b" style="top:835.04px;height:16.8px;line-height:16.8px;font-size:12.000px;color:#ececec;left:1777.2px;">组件封面</span>
<svg style="left:2026.64px;top:835.44px;width:4px;height:14.72px;" viewBox="0 0 5 18.4"><circle cx="2.5" cy="2.5" r="2.3" fill="#e2e2e2"/><circle cx="2.5" cy="9.2" r="2.3" fill="#e2e2e2"/><circle cx="2.5" cy="15.9" r="2.3" fill="#e2e2e2"/></svg>
<div style="left:255px;top:1064px;width:1492.2px;height:40px;background:#2d2e33;"></div>
<div style="left:314.8px;top:1064px;width:129.6px;height:40px;background:#242529;"></div>
<div style="left:314.8px;top:1064px;width:129.6px;height:1.04px;background:#1890ff;"></div>
<div style="left:314.4px;top:1064px;width:0.96px;height:40px;background:#26272b;"></div>
<div style="left:444.16px;top:1064px;width:0.96px;height:40px;background:#26272b;"></div>
<div style="left:475.36px;top:1064px;width:0.96px;height:40px;background:#26272b;"></div>
<div style="left:534.56px;top:1064px;width:0.96px;height:40px;background:#26272b;"></div>
<span class="t" style="top:1076.24px;height:16.8px;line-height:16.8px;font-size:12.000px;color:#e4e4e4;left:264.8px;">前景</span>
<svg style="left:293.44px;top:1070.48px;width:13.6px;height:13.6px;" viewBox="0 0 17 17"><circle cx="8.5" cy="8.5" r="7.6" stroke="#e2e2e2" stroke-width="1.2" fill="none"/><path d="M8.5 4.6V12.4M4.6 8.5H12.4" stroke="#e2e2e2" stroke-width="1.2"/></svg>
<svg style="left:324.8px;top:1080.8px;width:12px;height:11.2px;" viewBox="0 0 15 14"><path d="M1.5 1.2H13.5V9.6H1.5Z" stroke="#1890ff" stroke-width="1.5" fill="none"/><path d="M4.6 9.6L3.4 13.4M10.4 9.6L11.6 13.4" stroke="#1890ff" stroke-width="1.4" fill="none"/></svg>
<span class="t" style="top:1077.088px;height:17.024px;line-height:17.024px;font-size:12.160px;color:#1890ff;left:342.24px;transform:scaleX(0.97);transform-origin:0 50%;">子看板1</span>
<svg style="left:453.6px;top:1077.6px;width:12.8px;height:12.8px;" viewBox="0 0 16 16"><path d="M8 0.5V15.5M0.5 8H15.5" stroke="#f0f0f0" stroke-width="2.3" fill="none"/></svg>
<span class="t" style="top:1076.24px;height:16.8px;line-height:16.8px;font-size:12.000px;color:#e4e4e4;left:486px;">背景</span>
<svg style="left:513.6px;top:1070.48px;width:13.6px;height:13.6px;" viewBox="0 0 17 17"><circle cx="8.5" cy="8.5" r="7.6" stroke="#e2e2e2" stroke-width="1.2" fill="none"/><path d="M8.5 4.6V12.4M4.6 8.5H12.4" stroke="#e2e2e2" stroke-width="1.2"/></svg>
<span class="t" style="top:1040px;height:16.8px;line-height:16.8px;font-size:12.000px;color:#66686c;left:1592px;transform:scaleX(0.965);transform-origin:0 50%;">当前选中: 子看板1 &gt; </span>
<span class="t" style="top:1040.24px;height:16.8px;line-height:16.8px;font-size:12.000px;color:#a6a7aa;right:316px;transform:scaleX(0.97);transform-origin:100% 50%;">iframe</span>
<span class="t b" style="top:1075.72px;height:17.36px;line-height:17.36px;font-size:12.400px;color:#d0d0d0;right:379.2px;transform:scaleX(0.84);transform-origin:100% 50%;">76.46%</span>
<svg style="left:1679.2px;top:1076px;width:15.2px;height:15.2px;" viewBox="0 0 19 19"><rect x="0.8" y="0.8" width="17.4" height="17.4" rx="1.2" stroke="#d4d4d4" stroke-width="1.4" fill="none"/><path d="M9.5 3.2V15.8M3.2 9.5H15.8" stroke="#d4d4d4" stroke-width="1.2" stroke-dasharray="2 1.6"/><path d="M7.6 5L9.5 3L11.4 5M7.6 14L9.5 16L11.4 14M5 7.6L3 9.5L5 11.4M14 7.6L16 9.5L14 11.4" stroke="#d4d4d4" stroke-width="1.1" fill="none"/></svg>
<div style="left:1698.4px;top:1068.8px;width:0.96px;height:30.4px;background:#3a3b40;"></div>
<svg style="left:1702.4px;top:1078px;width:18.8px;height:12px;" viewBox="0 0 23.5 15"><rect x="0.9" y="0.9" width="21.7" height="13.2" rx="2.6" stroke="#d4d4d4" stroke-width="1.6" fill="none"/><path d="M4.6 5.2H18.9" stroke="#d4d4d4" stroke-width="1.6" stroke-dasharray="1.8 1.6"/><path d="M4.6 9.8H6.4M8.2 9.8H15.3M17.1 9.8H18.9" stroke="#d4d4d4" stroke-width="1.6"/></svg>
<div style="left:1723.2px;top:1068.8px;width:0.96px;height:30.4px;background:#3a3b40;"></div>
<svg style="left:1727.6px;top:1076.4px;width:16px;height:15.2px;" viewBox="0 0 20 19"><rect x="0.8" y="0.8" width="18.4" height="17.4" stroke="#d4d4d4" stroke-width="1.5" fill="none"/><path d="M4.4 5.6L8.8 9.5L4.4 13.4M10.2 13.6H15" stroke="#d4d4d4" stroke-width="1.5" fill="none"/></svg>
<div style="left:1747.2px;top:1063.6px;width:300.8px;height:40.4px;background:#37383e;"></div>
<div style="left:1747.2px;top:1063.6px;width:300.8px;height:0.96px;background:#2a2b2f;"></div>
<span class="t b" style="top:1064.88px;height:16.8px;line-height:16.8px;font-size:12.000px;color:#f0f0f0;left:1750.4px;">内存：</span>
<span class="t b" style="top:1064.76px;height:17.36px;line-height:17.36px;font-size:12.400px;color:#f0f0f0;left:1785.2px;transform:scaleX(0.864);transform-origin:0 50%;">789 / 3278 / 4096 MB</span>
<span class="t b" style="top:1064.76px;height:17.36px;line-height:17.36px;font-size:12.400px;color:#f0f0f0;left:1893.6px;transform:scaleX(0.802);transform-origin:0 50%;">1135 / 1924 MB</span>
<span class="t b" style="top:1064.76px;height:17.36px;line-height:17.36px;font-size:12.400px;color:#f0f0f0;right:4px;transform:scaleX(0.84);transform-origin:100% 50%;">32</span>
<span class="t b" style="top:1064.76px;height:17.36px;line-height:17.36px;font-size:12.400px;color:#f0f0f0;right:16.4px;transform:scaleX(0.84);transform-origin:100% 50%;">FPS：</span>
<span class="t b" style="top:1085.52px;height:16.8px;line-height:16.8px;font-size:12.000px;color:#f0f0f0;left:1750.4px;transform:scaleX(0.93);transform-origin:0 50%;">组件数:</span>
<span class="t b" style="top:1085.32px;height:17.36px;line-height:17.36px;font-size:12.400px;color:#f0f0f0;left:1791.2px;transform:scaleX(0.84);transform-origin:0 50%;">5 / 5</span>
<span class="t b" style="top:1085.32px;height:17.36px;line-height:17.36px;font-size:12.400px;color:#f0f0f0;right:4px;transform:scaleX(0.842);transform-origin:100% 50%;">4.2.0-beta.32</span>
</body></html>
